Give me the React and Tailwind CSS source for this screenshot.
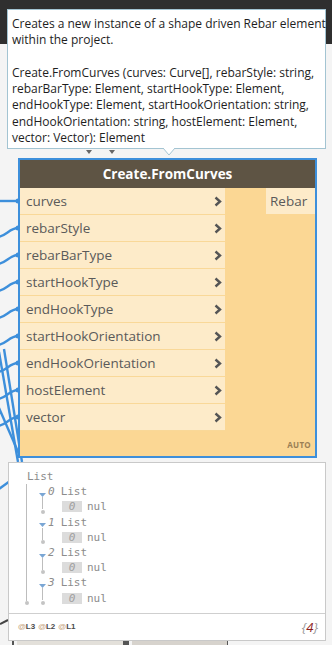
import React from "react";

const inputs = [
  "curves",
  "rebarStyle",
  "rebarBarType",
  "startHookType",
  "endHookType",
  "startHookOrientation",
  "endHookOrientation",
  "hostElement",
  "vector",
];

const tipLines = [
  "Creates a new instance of a shape driven Rebar element",
  "within the project.",
  "",
  "Create.FromCurves (curves: Curve[], rebarStyle: string,",
  "rebarBarType: Element, startHookType: Element,",
  "endHookType: Element, startHookOrientation: string,",
  "endHookOrientation: string, hostElement: Element,",
  "vector: Vector): Element",
];

function Chevron() {
  return (
    <svg width="8" height="11" viewBox="0 0 8 11" className="shrink-0">
      <polyline points="1.5,1.5 6,5.5 1.5,9.5" fill="none" stroke="#555" strokeWidth="2.4" />
    </svg>
  );
}

function Wires() {
  const ports = inputs.map((_, i) => 201 + i * 27);
  return (
    <svg className="absolute left-0 top-0 pointer-events-none" width="332" height="645">
      <g stroke="#3d8fdb" strokeWidth="2.4" fill="none">
        {ports.map((y, i) => (
          <path
            key={i}
            d={i === 0 ? `M-2 ${y} L18 ${y}` : `M-2 ${y + 9} C6 ${y + 8}, 10 ${y}, 18 ${y}`}
          />
        ))}
        <path d="M4 349 L22 462" />
        <path d="M-1 352 L18 462" />
        <path d="M-1 408 L19 454" />
        <path d="M-1 489 L10 481" />
      </g>
      <g fill="#3d8fdb">
        {ports.map((y, i) => (
          <circle key={i} cx="18" cy={y} r="2.5" />
        ))}
      </g>
      <path d="M0 624 L8 620" stroke="#444" strokeWidth="2" />
    </svg>
  );
}

function Tooltip() {
  return (
    <div className="absolute left-[7px] top-[9px] w-[319px] h-[140px] bg-white border border-[#a3c4d2] pl-[4px] pt-[6px] font-['Open_Sans',sans-serif] text-[12px] leading-[16.3px] text-[#1e1e1e]">
      {tipLines.map((l, i) => (
        <div key={i} className="whitespace-nowrap h-[16.3px]">
          {l}
        </div>
      ))}
      <svg className="absolute left-[155px] top-[138px]" width="12" height="8">
        <polygon points="0,0 12,0 6,7" fill="#fff" />
        <polyline points="0,0 6,7 12,0" fill="none" stroke="#a3c4d2" strokeWidth="1" />
      </svg>
    </div>
  );
}

function TreeGroup({ n }) {
  return (
    <div className="relative">
      <div className="flex items-center h-[15.2px]">
        <svg width="7" height="4" className="ml-[12px] mt-[6px] shrink-0">
          <polygon points="0,0 7,0 3.5,4" fill="#7aa6d4" />
        </svg>
        <span className="italic ml-[2px]">{n}</span>
        <span className="ml-[6px]">List</span>
      </div>
      <div className="flex items-center h-[15.2px] pl-[35px]">
        <span className="w-[20px] h-[11px] bg-[#dcdcdc] text-[#a0a0a0] italic flex items-center justify-center leading-none">0</span>
        <span className="ml-[5px]">nul</span>
      </div>
      <div className="absolute left-[15px] top-[13px] h-[12px] w-px bg-[#bdbdbd]" />
      <div className="absolute left-[13.5px] top-[25.5px] w-[4px] h-[4px] rounded-full bg-[#c4c4c4]" />
    </div>
  );
}

function Watch() {
  return (
    <div className="relative ml-[8px] mt-[4px] w-[318px] h-[179px] bg-white border border-[#c9c9c9] flex flex-col">
      <div className="flex-1 pt-[6px] pl-[18px] font-['DejaVu_Sans_Mono',monospace] text-[11px] leading-[15.2px] text-[#8c8c8c]">
        <div className="h-[15.2px]">List</div>
        <div className="relative">
          <div className="absolute left-[-1px] top-0 h-[117px] w-px bg-[#bdbdbd]" />
          <div className="absolute left-[-2.5px] top-[116.5px] w-[4px] h-[4px] rounded-full bg-[#c4c4c4]" />
          {[0, 1, 2, 3].map((n) => (
            <TreeGroup key={n} n={n} />
          ))}
        </div>
      </div>
      <div className="h-[27px] border-t border-[#cfcfcf] flex items-center justify-between pl-[9px] pr-[7px]">
        <div className="flex gap-[3px] font-['Liberation_Sans',sans-serif] text-[8px] font-bold">
          {["L3", "L2", "L1"].map((l) => (
            <span key={l}>
              <span className="text-[#c8a682]">@</span>
              <span className="text-[#4a4a4a]">{l}</span>
            </span>
          ))}
        </div>
        <div className="font-['Open_Sans',sans-serif] italic text-[13px] leading-none">
          <span className="text-[#9a9a9a]">{"{"}</span>
          <span className="text-[#8b1c1c]">4</span>
          <span className="text-[#9a9a9a]">{"}"}</span>
        </div>
      </div>
    </div>
  );
}

export default function App() {
  return (
    <div className="relative w-[332px] h-[645px] overflow-hidden bg-[#f4f4f4] font-['Open_Sans',sans-serif]">
      <Wires />
      <div className="relative h-[44px] bg-[#2f2f2f]" />

      <svg className="absolute left-[86px] top-[149px]" width="30" height="8">
        <polygon points="0,1 6,1 3,5" fill="#666" />
        <polygon points="23,1 29,1 26,5" fill="#666" />
      </svg>

      <div className="relative ml-[18px] mt-[114px] w-[299px] border-2 border-[#3d8fdb] bg-[#fbd794]">
        <div className="h-[28px] bg-[#5e5444] flex items-center justify-center text-white font-bold text-[13.5px]">
          Create.FromCurves
        </div>
        <div className="flex h-[268px]">
          <div className="w-[205px] flex flex-col">
            {inputs.map((name) => (
              <div
                key={name}
                className="h-[27px] bg-[#fdebc9] border-b border-[#f9d898] flex items-center justify-between pl-[6px] pr-[3px] text-[13.5px] text-[#5a5a5a]"
              >
                <span>{name}</span>
                <Chevron />
              </div>
            ))}
          </div>
          <div className="flex-1 relative flex flex-col items-end">
            <div className="w-[49px] h-[26px] bg-[#fdebc9] flex items-center pl-[4px] text-[13.5px] text-[#5a5a5a]">
              Rebar
            </div>
            <div className="mt-auto mb-[5px] mr-[4px] text-[8px] font-bold text-[#9a7f55] tracking-[0.3px]">AUTO</div>
          </div>
        </div>
      </div>

      <Watch />

      <div className="relative flex h-[4px] items-stretch">
        <div className="ml-[12px] w-[2px] bg-[#555]" />
        <div className="ml-[3px] w-[106px] bg-[#e3e0da]" />
        <div className="w-[6px] bg-[#555]" />
        <div className="ml-[3px] w-[95px] bg-[#d7d3cd]" />
        <div className="w-px bg-[#555]" />
      </div>

      <Tooltip />
    </div>
  );
}
